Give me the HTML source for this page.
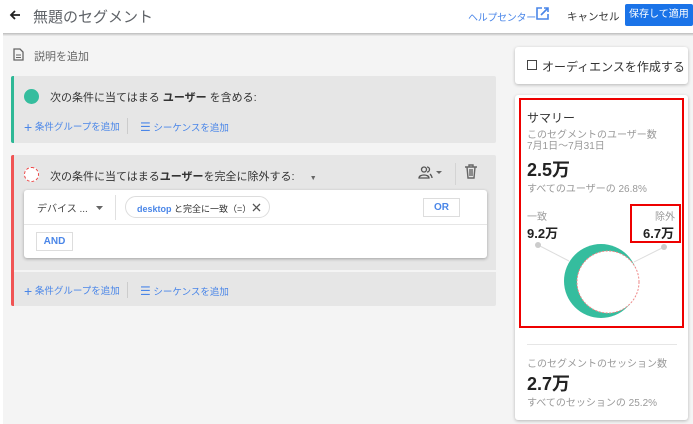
<!DOCTYPE html>
<html><head><meta charset="utf-8"><style>
*{margin:0;padding:0;box-sizing:border-box}
body{width:693px;height:424px;overflow:hidden;background:#fff;font-family:"Liberation Sans","Noto Sans CJK JP",sans-serif;position:relative;color:#3c4043}
.a{position:absolute;white-space:nowrap}
.blue{color:#4a86e8}
</style></head><body>
<div class="a" style="left:3px;top:35px;width:690px;height:389px;background:#f4f4f4"></div>
<div class="a" style="left:3px;top:33px;width:690px;height:3px;background:linear-gradient(#bbb,#eee)"></div>
<svg class="a" style="left:9px;top:9px" width="12" height="12"><path d="M11 6H2M6 2L2 6l4 4" stroke="#222" stroke-width="1.8" fill="none"/></svg>
<div class="a" style="left:33px;top:6px;font-size:15px;color:#5f6368">無題のセグメント</div>
<div class="a blue" style="left:468px;top:9px;font-size:10px;letter-spacing:-0.3px">ヘルプセンター</div>
<svg class="a" style="left:536px;top:7px" width="13" height="13"><path d="M6 1H1v11h11V7" stroke="#4a86e8" stroke-width="1.6" fill="none"/><path d="M8 1h4v4M12 1L5 8" stroke="#4a86e8" stroke-width="1.6" fill="none"/></svg>
<div class="a" style="left:567px;top:9px;font-size:10.5px;color:#333">キャンセル</div>
<div class="a" style="left:625px;top:4px;width:68px;height:22px;background:#1a73e8;border-radius:2px;color:#fff;font-size:10px;line-height:22px;padding-left:4px">保存して適用</div>
<svg class="a" style="left:13px;top:48px" width="11" height="13"><path d="M1 1h6l3 3v8H1z" stroke="#666" stroke-width="1.3" fill="none"/><path d="M3 7h5M3 9.5h5" stroke="#666"/></svg>
<div class="a" style="left:34px;top:48px;font-size:11px;color:#666">説明を追加</div>
<div class="a" style="left:11px;top:76px;width:485px;height:67px;background:#e6e6e6;border-left:3px solid #2eb896;border-radius:2px"></div>
<div class="a" style="left:24px;top:89px;width:15px;height:15px;border-radius:50%;background:#35bd9e"></div>
<div class="a" style="left:50px;top:89px;font-size:11px;color:#333">次の条件に当てはまる <b>ユーザー</b> を含める:</div>
<div class="a blue" style="left:24px;top:119px;font-size:9.5px"><span style="font-size:14px;vertical-align:-2px">+</span> 条件グループを追加</div>
<div class="a" style="left:127px;top:118px;width:1px;height:16px;background:#ccc"></div>
<div class="a blue" style="left:140px;top:120px;font-size:9.5px"><span style="font-size:12px">☰</span> シーケンスを追加</div>
<div class="a" style="left:11px;top:155px;width:485px;height:151px;background:#e6e6e6;border-left:3px solid #f05454;border-radius:2px"></div>
<div class="a" style="left:24px;top:167px;width:15px;height:15px;border-radius:50%;border:1px dashed #e44;background:#fff"></div>
<div class="a" style="left:50px;top:168px;font-size:11px;color:#333">次の条件に当てはまる<b>ユーザー</b>を完全に除外する: <span style="font-size:7px;color:#666;margin-left:12px">▼</span></div>
<svg class="a" style="left:418px;top:166px" width="26" height="13"><circle cx="6" cy="3.5" r="2.5" stroke="#555" stroke-width="1.3" fill="none"/><path d="M1 12c0-4 10-4 10 0z" stroke="#555" stroke-width="1.3" fill="none"/><path d="M9 1a2.5 2.5 0 010 5M12 8c1 1 2 2 2 4" stroke="#555" stroke-width="1.3" fill="none"/><path d="M18 5h6l-3 3z" fill="#666"/></svg>
<div class="a" style="left:455px;top:163px;width:1px;height:22px;background:#d4d4d4"></div>
<svg class="a" style="left:464px;top:164px" width="14" height="15"><path d="M1 3h12M5 3V1h4v2M3 3l1 11h6l1-11M6 5v7M8 5v7" stroke="#666" stroke-width="1.4" fill="none"/></svg>
<div class="a" style="left:24px;top:190px;width:463px;height:68px;background:#fff;border-radius:3px;box-shadow:0 1px 3px rgba(0,0,0,.3)"></div>
<div class="a" style="left:24px;top:224px;width:463px;height:1px;background:#e6e6e6"></div>
<div class="a" style="left:37px;top:200px;font-size:10px;color:#444">デバイス ...</div>
<svg class="a" style="left:96px;top:206px" width="7" height="4"><path d="M0 0h7L3.5 4z" fill="#666"/></svg>
<div class="a" style="left:115px;top:195px;width:1px;height:25px;background:#e0e0e0"></div>
<div class="a" style="left:125px;top:196px;width:145px;height:22px;border:1px solid #ddd;border-radius:11px"></div>
<div class="a" style="left:137px;top:202px;font-size:9px;color:#333"><b class="blue">desktop</b> と完全に一致（=）</div>
<svg class="a" style="left:252px;top:203px" width="9" height="9"><path d="M1 1l7 7M8 1L1 8" stroke="#555" stroke-width="1.3"/></svg>
<div class="a blue" style="left:423px;top:198px;width:37px;height:19px;border:1px solid #ddd;font-size:10px;font-weight:bold;text-align:center;line-height:17px">OR</div>
<div class="a blue" style="left:36px;top:232px;width:37px;height:19px;border:1px solid #ddd;font-size:10px;font-weight:bold;text-align:center;line-height:17px">AND</div>
<div class="a" style="left:14px;top:270px;width:482px;height:2px;background:#f4f4f4"></div>
<div class="a blue" style="left:24px;top:283px;font-size:9.5px"><span style="font-size:14px;vertical-align:-2px">+</span> 条件グループを追加</div>
<div class="a" style="left:127px;top:282px;width:1px;height:16px;background:#ccc"></div>
<div class="a blue" style="left:140px;top:284px;font-size:9.5px"><span style="font-size:12px">☰</span> シーケンスを追加</div>
<div class="a" style="left:515px;top:47px;width:173px;height:37px;background:#fff;border-radius:3px;box-shadow:0 1px 3px rgba(0,0,0,.25)"></div>
<div class="a" style="left:527px;top:60px;width:10px;height:10px;border:1.5px solid #444"></div>
<div class="a" style="left:542px;top:58px;font-size:12px;color:#333">オーディエンスを作成する</div>
<div class="a" style="left:515px;top:95px;width:173px;height:325px;background:#fff;border-radius:3px;box-shadow:0 1px 3px rgba(0,0,0,.25)"></div>
<div class="a" style="left:519px;top:98px;width:165px;height:230px;border:2px solid #e00"></div>
<div class="a" style="left:527px;top:109px;font-size:12px;color:#333">サマリー</div>
<div class="a" style="left:527px;top:130px;font-size:10px;color:#999;line-height:11px">このセグメントのユーザー数<br>7月1日～7月31日</div>
<div class="a" style="left:527px;top:156px;font-size:18px;font-weight:bold;color:#222">2.5万</div>
<div class="a" style="left:527px;top:180px;font-size:10px;color:#999">すべてのユーザーの 26.8%</div>
<div class="a" style="left:527px;top:208px;font-size:10px;color:#999">一致</div>
<div class="a" style="left:527px;top:223px;font-size:13px;font-weight:bold;color:#222">9.2万</div>
<div class="a" style="left:630px;top:204px;width:51px;height:39px;border:2px solid #e00"></div>
<div class="a" style="left:655px;top:208px;font-size:10px;color:#999">除外</div>
<div class="a" style="left:643px;top:223px;font-size:13px;font-weight:bold;color:#222">6.7万</div>
<svg class="a" style="left:519px;top:235px" width="165" height="93">
<line x1="19" y1="10" x2="50" y2="26" stroke="#ddd"/><circle cx="19" cy="10" r="3" fill="#ccc"/>
<line x1="145" y1="12" x2="115" y2="27" stroke="#ddd"/><circle cx="145" cy="12" r="3" fill="#ccc"/>
<circle cx="82" cy="46" r="37" fill="#35bd9e"/>
<circle cx="89" cy="47" r="31" fill="#fff" stroke="#e88" stroke-dasharray="2 1.5" stroke-width="1"/>
</svg>
<div class="a" style="left:527px;top:344px;width:150px;height:1px;background:#e6e6e6"></div>
<div class="a" style="left:527px;top:355px;font-size:10px;color:#999">このセグメントのセッション数</div>
<div class="a" style="left:527px;top:370px;font-size:18px;font-weight:bold;color:#222">2.7万</div>
<div class="a" style="left:527px;top:394px;font-size:10px;color:#999">すべてのセッションの 25.2%</div>
</body></html>
